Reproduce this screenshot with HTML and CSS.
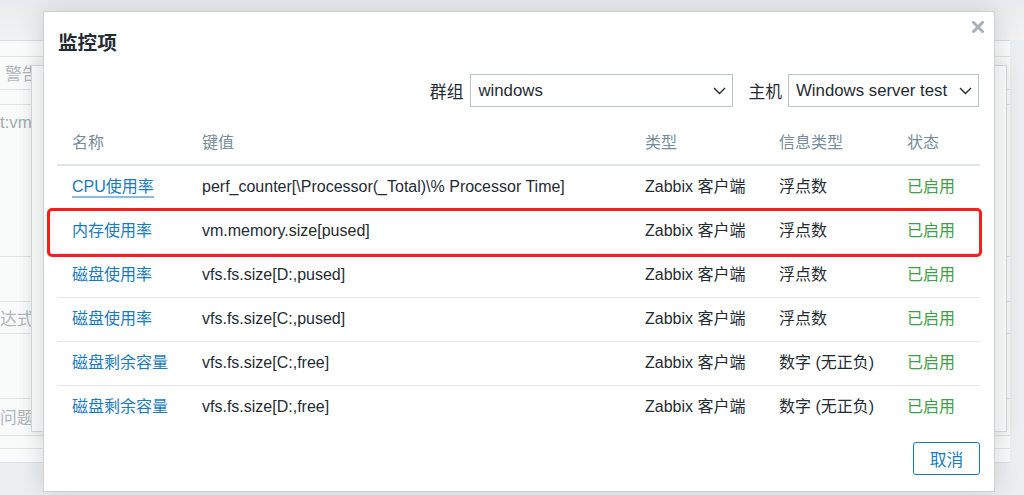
FILE: index.html
```html
<html>
    <head>
        <meta charset="UTF-8">
        <title>监控项</title>
        <link rel="stylesheet" href="styles.css">
    </head>
    <body>
        <div class="page">
            <div class="band"></div>
            <div class="sheet">
                <div class="bg-row" style="height:15px"></div>
                <div class="bg-row bg-mid" style="height:32px"><span class="bg-text">警告</span></div>
                <div class="bg-row" style="height:14px"></div>
                <div class="bg-row bg-top" style="height:152px"><span class="bg-text dark flush">t:vm</span></div>
                <div class="bg-row" style="height:44px"></div>
                <div class="bg-row bg-mid" style="height:31px"><span class="bg-text flush">达式</span></div>
                <div class="bg-row" style="height:64px"></div>
                <div class="bg-row bg-mid" style="height:36px"><span class="bg-text flush">问题如</span></div>
                <div class="bg-row" style="height:12px"></div>
                <div class="bg-row" style="height:13px"></div>
            </div>
        </div>

        <div class="back-dialog"></div>

        <div class="modal">
            <div class="modal-head">
                <h4>监控项</h4>
                <span class="close">
                    <svg width="12" height="12" viewBox="0 0 12 12"><path d="M1.5 1.5l9 9M10.5 1.5l-9 9" stroke="#a7b2b8" stroke-width="3" stroke-linecap="square"/></svg>
                </span>
            </div>

            <div class="filter">
                <label>群组</label>
                <div class="select wide">
                    <span>windows</span>
                    <svg width="13" height="8" viewBox="0 0 13 8"><path d="M1 1l5.5 5.5L12 1" fill="none" stroke="#1f2c33" stroke-width="1.4"/></svg>
                </div>
                <label class="gap">主机</label>
                <div class="select narrow">
                    <span>Windows server test</span>
                    <svg width="13" height="8" viewBox="0 0 13 8"><path d="M1 1l5.5 5.5L12 1" fill="none" stroke="#1f2c33" stroke-width="1.4"/></svg>
                </div>
            </div>

            <table class="items">
                <tr>
                    <th class="c-name">名称</th>
                    <th class="c-key">键值</th>
                    <th class="c-type">类型</th>
                    <th class="c-info">信息类型</th>
                    <th class="c-status">状态</th>
                </tr>
                <tr>
                    <td><a class="link focus">CPU使用率</a></td>
                    <td>perf_counter[\Processor(_Total)\% Processor Time]</td>
                    <td>Zabbix 客户端</td>
                    <td>浮点数</td>
                    <td class="green">已启用</td>
                </tr>
                <tr>
                    <td><a class="link">内存使用率</a></td>
                    <td>vm.memory.size[pused]</td>
                    <td>Zabbix 客户端</td>
                    <td>浮点数</td>
                    <td class="green">已启用</td>
                </tr>
                <tr>
                    <td><a class="link">磁盘使用率</a></td>
                    <td>vfs.fs.size[D:,pused]</td>
                    <td>Zabbix 客户端</td>
                    <td>浮点数</td>
                    <td class="green">已启用</td>
                </tr>
                <tr>
                    <td><a class="link">磁盘使用率</a></td>
                    <td>vfs.fs.size[C:,pused]</td>
                    <td>Zabbix 客户端</td>
                    <td>浮点数</td>
                    <td class="green">已启用</td>
                </tr>
                <tr>
                    <td><a class="link">磁盘剩余容量</a></td>
                    <td>vfs.fs.size[C:,free]</td>
                    <td>Zabbix 客户端</td>
                    <td>数字 (无正负)</td>
                    <td class="green">已启用</td>
                </tr>
                <tr class="last">
                    <td><a class="link">磁盘剩余容量</a></td>
                    <td>vfs.fs.size[D:,free]</td>
                    <td>Zabbix 客户端</td>
                    <td>数字 (无正负)</td>
                    <td class="green">已启用</td>
                </tr>
            </table>

            <div class="modal-foot">
                <button class="btn-alt">取消</button>
            </div>

            <div class="mark"></div>
        </div>
    </body>
</html>
```

FILE: styles.css
```css
body{
    margin: 0;
    background-color: #eceff1;
    font-family: "Liberation Sans", "Noto Sans CJK SC", sans-serif;
    font-size: 16.8px;
    color: #1f2c33;
    overflow: hidden;
}
.page{
    width: 1024px;
    height: 495px;
}
.band{
    height: 40px;
    background: linear-gradient(#e9ecee, #f0f2f3);
}
.sheet{
    background-color: #f9fafa;
    border-top: 1px solid #d5dbde;
    width: 1010px;
}
.bg-row{
    border-bottom: 1px solid #dde2e5;
    display: flex;
    overflow: hidden;
    white-space: nowrap;
}
.bg-mid{
    align-items: center;
}
.bg-top{
    align-items: flex-start;
    padding-top: 8px;
    box-sizing: border-box;
}
.bg-text{
    color: #b1b8bc;
    padding-left: 5px;
}
.bg-text.dark{
    color: #a2abb0;
}
.bg-text.flush{
    padding-left: 0;
}
.back-dialog{
    position: absolute;
    left: 31px;
    top: 65px;
    width: 976px;
    height: 367px;
    box-sizing: border-box;
    background-color: #fafbfb;
    border: 1px solid #d3d9dc;
    box-shadow: 0 0 14px rgba(0, 0, 0, 0.08);
}
.modal{
    position: absolute;
    left: 43px;
    top: 11px;
    width: 952px;
    height: 481px;
    box-sizing: border-box;
    background-color: #ffffff;
    border: 1px solid #c9d2d7;
    box-shadow: 0 0 24px rgba(0, 0, 0, 0.14);
    padding: 0 14px 0 13px;
}
.modal-head{
    padding-top: 19px;
    height: 43px;
    box-sizing: border-box;
}
.modal-head h4{
    margin: 0 0 0 1px;
    font-size: 19.6px;
    line-height: 24px;
    font-weight: bold;
    color: #1f2c33;
}
.close{
    position: absolute;
    right: 10px;
    top: 9px;
    display: flex;
}
.filter{
    margin-top: 19px;
    display: flex;
    justify-content: flex-end;
    align-items: center;
    height: 33px;
    padding-right: 1px;
}
.filter label{
    color: #1f2c33;
    margin-right: 7px;
}
.filter label.gap{
    margin-left: 15px;
    margin-right: 6px;
}
.select{
    height: 33px;
    box-sizing: border-box;
    border: 1px solid #b9c5cc;
    display: flex;
    align-items: center;
    justify-content: space-between;
    padding: 0 6px 0 7px;
}
.select.wide{
    width: 263px;
}
.select.narrow{
    width: 191px;
}
.items{
    width: 923px;
    border-collapse: collapse;
    table-layout: fixed;
}
.items th{
    font-weight: normal;
    color: #768d99;
    text-align: left;
    padding: 26px 0 11px 15px;
    line-height: 20px;
    border-bottom: 2px solid #dfe4e7;
}
.c-name{ width: 115px; }
.c-key{ width: 428px; }
.c-type{ width: 119px; }
.c-info{ width: 113px; }
.items td{
    height: 44px;
    padding: 0 0 0 15px;
    border-bottom: 1px solid #e5e9ec;
    white-space: nowrap;
    line-height: 20px;
}
.items tr.last td{
    border-bottom: none;
}
.link{
    color: #1a7bbf;
    text-decoration: none;
}
.link.focus{
    border-bottom: 2px solid #8cbde0;
    padding-bottom: 1px;
}
.green{
    color: #429e47;
}
.modal-foot{
    margin-top: 13px;
    display: flex;
    justify-content: flex-end;
}
.btn-alt{
    width: 67px;
    height: 33px;
    border: 1px solid #0f7ac2;
    border-radius: 3px;
    background-color: #ffffff;
    color: #1a7bbf;
    font-family: "Liberation Sans", "Noto Sans CJK SC", sans-serif;
    font-size: 16.8px;
    padding: 0;
}
.mark{
    position: absolute;
    left: 3px;
    top: 196px;
    width: 935px;
    height: 49px;
    box-sizing: border-box;
    border: 3px solid #ff1b1b;
    border-radius: 5px;
}
```
